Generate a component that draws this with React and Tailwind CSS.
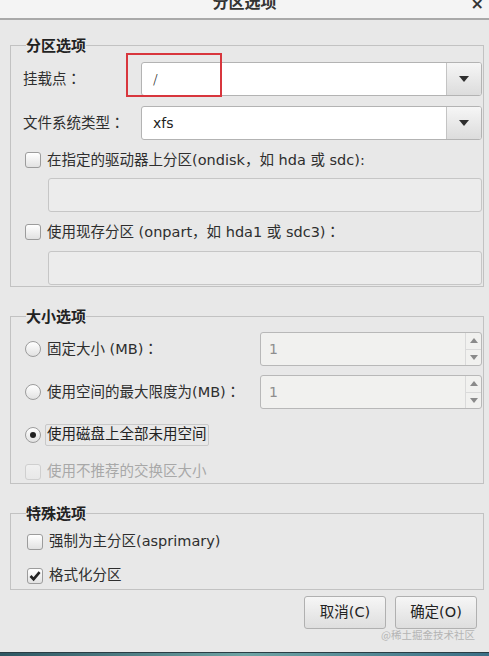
import React from 'react';

// Anaconda-style "分区选项" dialog (GTK look)

const font = { fontFamily: '"DejaVu Sans", "Noto Sans CJK SC", sans-serif' };
const cjk = { fontFamily: '"Noto Sans CJK SC", sans-serif' };
const cjkTc = { fontFamily: '"Noto Sans CJK TC", sans-serif' };

// full-width punctuation needs a CJK face, DejaVu draws it narrow
const P = ({ children }) => <span style={cjk}>{children}</span>;
// centred colon, as GTK shows it
const C = () => <span style={cjkTc}>：</span>;

function Check({ checked = false, disabled = false }) {
  return (
    <span
      className={`flex h-[16px] w-[16px] shrink-0 items-center justify-center rounded-[3px] border bg-gradient-to-b ${
        disabled ? 'border-[#cfcfcf] from-[#f0f0f0] to-[#e8e8e8]' : 'border-[#9c9c9c] from-[#ffffff] to-[#e2e2e2]'
      }`}
    >
      {checked && (
        <svg width="12" height="12" viewBox="0 0 12 12">
          <path d="M1.5 6 L4.6 9.2 L10.6 2.2" fill="none" stroke="#222" strokeWidth="2.6" />
        </svg>
      )}
    </span>
  );
}

function Radio({ checked = false }) {
  return (
    <span className="flex h-[16px] w-[16px] shrink-0 items-center justify-center rounded-full border border-[#9c9c9c] bg-gradient-to-b from-[#ffffff] to-[#e2e2e2]">
      {checked && <span className="h-[6px] w-[6px] rounded-full bg-[#222]" />}
    </span>
  );
}

function Combo({ value, thin }) {
  return (
    <div className="flex h-[34px] flex-1 overflow-hidden rounded-[3px] border border-[#b3b3b3] bg-white">
      <div className={`flex flex-1 items-center pl-[11px] text-[14px] text-[#222] ${thin ? 'font-light' : ''}`}>{value}</div>
      <div className="flex w-[35px] items-center justify-center border-l border-[#c4c4c4] bg-gradient-to-b from-[#f6f6f6] to-[#dcdcdc]">
        <svg width="10" height="6" viewBox="0 0 10 6">
          <path d="M0 0 H10 L5 6 Z" fill="#2e2e2e" />
        </svg>
      </div>
    </div>
  );
}

function Spin() {
  return (
    <div className="flex h-[34px] w-[222px] overflow-hidden rounded-[3px] border border-[#b8b8b8] bg-[#f1f1ef]">
      <div className="flex flex-1 items-center pl-[8px] text-[14px] text-[#8e8e8e]">1</div>
      <div className="flex w-[16px] flex-col border-l border-[#dadada]">
        <div className="flex flex-1 items-center justify-center border-b border-[#dadada]">
          <svg width="8" height="5" viewBox="0 0 8 5">
            <path d="M0 5 H8 L4 0 Z" fill="#8a8a8a" />
          </svg>
        </div>
        <div className="flex flex-1 items-center justify-center">
          <svg width="8" height="5" viewBox="0 0 8 5">
            <path d="M0 0 H8 L4 5 Z" fill="#8a8a8a" />
          </svg>
        </div>
      </div>
    </div>
  );
}

function Frame({ title, className = '', children }) {
  return (
    <fieldset className={`w-[474px] border border-[#c2c2c2] pl-[12px] pr-[1px] ${className}`}>
      <legend className="ml-[3px] h-[18px] text-[15px] font-bold leading-[18px] text-[#222]" style={cjk}>{title}</legend>
      {children}
    </fieldset>
  );
}

export default function App() {
  return (
    <div className="relative h-[656px] w-[489px] overflow-hidden bg-[#e8e8e8] text-[14.5px] text-[#2e2e2e]" style={font}>
      {/* title bar, cut off at the top */}
      <div className="relative h-[20px] overflow-hidden border-b-2 border-[#a9a9a9] bg-[#f4f4f4]">
        <div className="absolute left-0 right-0 top-[-11px] text-center text-[16px] font-bold text-[#333]" style={cjk}>分区选项</div>
        <div className="absolute right-[5px] top-[-8px] text-[16px] font-bold text-[#333]">×</div>
      </div>

      <div className="pl-[10px] pr-[5px]">
        <Frame title="分区选项" className="mt-[16px] pb-[1px] pt-[8px]">
          <div className="flex h-[34px] items-center">
            <span className="w-[118px]">挂载点<C /></span>
            <Combo value="/" thin />
          </div>
          <div className="mt-[10px] flex h-[34px] items-center">
            <span className="w-[118px]">文件系统类型<C /></span>
            <Combo value="xfs" />
          </div>
          <div className="ml-[2px] mt-[10px] flex h-[20px] items-center gap-[6px]">
            <Check />
            <span>在指定的驱动器上分区(ondisk<P>，</P>如 hda 或 sdc):</span>
          </div>
          <div className="ml-[25px] mt-[8px] h-[34px] rounded-[3px] border border-[#c6c6c6] bg-[#ececec]" />
          <div className="ml-[2px] mt-[10px] flex h-[20px] items-center gap-[6px]">
            <Check />
            <span>使用现存分区 (onpart<P>，</P>如 hda1 或 sdc3)<C /></span>
          </div>
          <div className="ml-[25px] mt-[9px] h-[34px] rounded-[3px] border border-[#c6c6c6] bg-[#ececec]" />
        </Frame>

        <Frame title="大小选项" className="mt-[20px] pb-[1px] pt-[7px]">
          <div className="flex h-[34px] items-center">
            <div className="ml-[2px] flex w-[235px] items-center gap-[6px]">
              <Radio />
              <span>固定大小 (MB)<C /></span>
            </div>
            <Spin />
          </div>
          <div className="mt-[9px] flex h-[34px] items-center">
            <div className="ml-[2px] flex w-[235px] items-center gap-[6px]">
              <Radio />
              <span>使用空间的最大限度为(MB)<C /></span>
            </div>
            <Spin />
          </div>
          <div className="ml-[2px] mt-[15px] flex h-[22px] items-center gap-[4px]">
            <Radio checked />
            <span className="flex h-[22px] items-center rounded-[2px] border border-[#c9c9c9] px-[1px] text-[#222]">使用磁盘上全部未用空间</span>
          </div>
          <div className="ml-[2px] mt-[16px] flex h-[20px] items-center gap-[6px] text-[#a8a8a8]">
            <Check disabled />
            <span>使用不推荐的交换区大小</span>
          </div>
        </Frame>

        <Frame title="特殊选项" className="mt-[20px] pb-[3px] pt-[10px]">
          <div className="ml-[4px] flex h-[20px] items-center gap-[6px]">
            <Check />
            <span>强制为主分区(asprimary)</span>
          </div>
          <div className="ml-[4px] mt-[14px] flex h-[20px] items-center gap-[6px]">
            <Check checked />
            <span>格式化分区</span>
          </div>
        </Frame>

        <div className="mt-[6px] flex justify-end gap-[9px] pr-[7px]">
          <button className="h-[33px] w-[82px] rounded-[3px] border border-[#b0b0b0] bg-gradient-to-b from-[#f6f6f6] to-[#dedede] text-[14.5px] text-[#222]">取消(C)</button>
          <button className="h-[33px] w-[82px] rounded-[3px] border border-[#b0b0b0] bg-gradient-to-b from-[#f6f6f6] to-[#dedede] text-[14.5px] text-[#222]">确定(O)</button>
        </div>
      </div>

      {/* red annotation box */}
      <div className="absolute left-[126px] top-[53px] h-[44px] w-[96px] border-2 border-[#d8363d]" />

      {/* watermark */}
      <div className="absolute left-[381px] top-[627px] text-[10.5px] text-[#b4b4b4]" style={cjk}>@稀土掘金技术社区</div>

      {/* desktop strip */}
      <div className="absolute bottom-0 left-0 right-0 h-[4px] border-t border-[#2a3c44] bg-gradient-to-r from-[#2d5662] via-[#6fa4a4] to-[#3b6f86]" />
    </div>
  );
}
